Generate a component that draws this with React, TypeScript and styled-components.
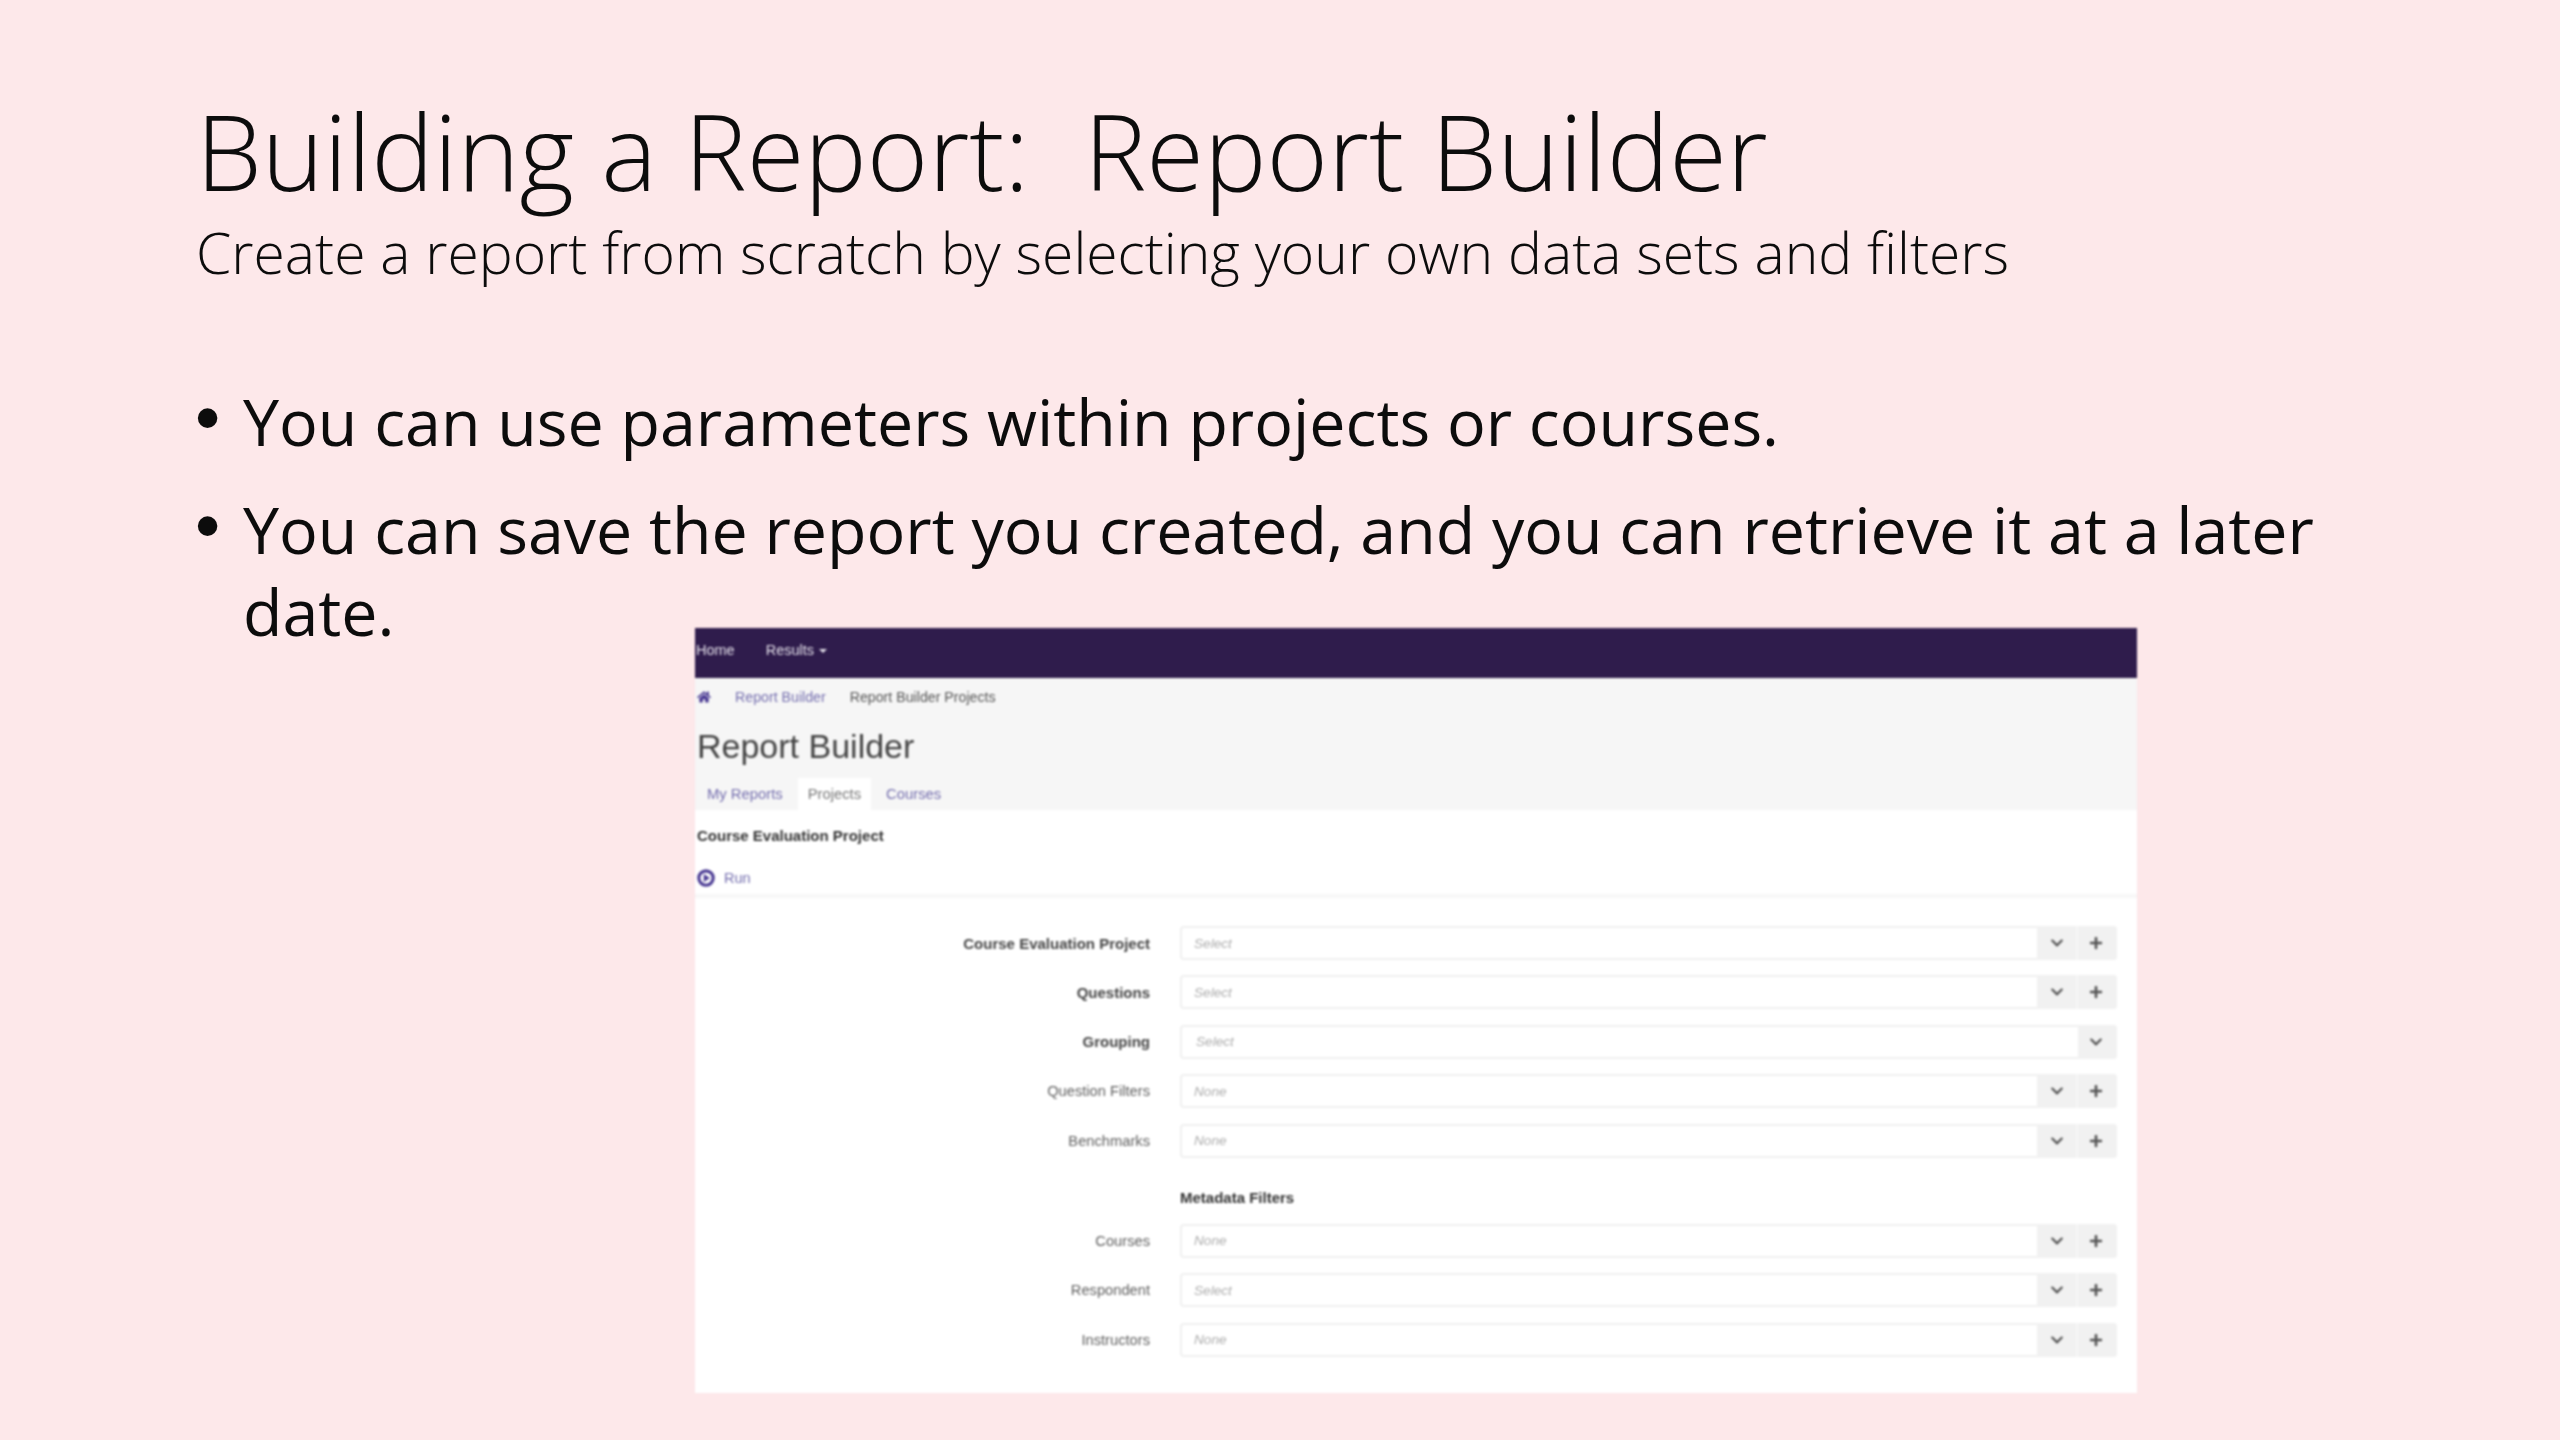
import React from "react";
import styled, { createGlobalStyle } from "styled-components";
import { FaChevronDown, FaHome, FaPlus } from "react-icons/fa";

const GlobalStyle = createGlobalStyle`
  html, body {
    margin: 0;
    padding: 0;
    background: #fde8ea;
  }
`;

const Slide = styled.div`
  width: 2560px;
  height: 1440px;
  box-sizing: border-box;
  overflow: hidden;
  padding: 86px 0 0 196px;
  display: flex;
  flex-direction: column;
  background: #fde8ea;
  color: #0c0c0c;
  font-family: "Open Sans", Lato, sans-serif;
`;

const Title = styled.h1`
  margin: 0;
  font-size: 105px;
  line-height: 130px;
  font-weight: 300;
  white-space: pre;
`;

const Subtitle = styled.p`
  margin: 0;
  font-size: 57px;
  line-height: 72px;
  font-weight: 300;
`;

const Bullets = styled.ul`
  list-style: none;
  margin: 92px 0 0;
  padding: 0;
  display: flex;
  flex-direction: column;
  gap: 26px;
`;

const Bullet = styled.li`
  position: relative;
  width: 2200px;
  padding-left: 47px;
  font-size: 64.5px;
  line-height: 82px;

  &::before {
    content: "•";
    position: absolute;
    left: -1px;
    top: -4px;
    font-family: "Liberation Sans", Arial, sans-serif;
    font-size: 72px;
  }
`;

const Panel = styled.div`
  width: 1442px;
  height: 765px;
  margin: -24px 0 0 499px;
  flex: none;
  background: #fff;
  color: #333;
  font-family: "Liberation Sans", Arial, sans-serif;
  font-size: 14.5px;
  filter: blur(0.8px);
`;

const NavBar = styled.div`
  height: 50px;
  display: flex;
  align-items: center;
  gap: 31px;
  padding: 0 0 6px 1px;
  box-sizing: border-box;
  background: #2f1c4c;
  color: #e4e0ea;
`;

const NavItem = styled.span`
  display: inline-flex;
  align-items: center;
  gap: 5px;
`;

const Caret = styled.span`
  width: 0;
  height: 0;
  margin-top: 2px;
  border-left: 4px solid transparent;
  border-right: 4px solid transparent;
  border-top: 4px solid #e4e0ea;
`;

const Header = styled.div`
  height: 132px;
  box-sizing: border-box;
  padding: 9px 0 0 2px;
  display: flex;
  flex-direction: column;
  background: #f6f6f6;
`;

const Crumbs = styled.div`
  height: 20px;
  display: flex;
  align-items: center;
  gap: 24px;
  color: #555;
  font-size: 14.2px;
  svg {
    color: #4b3b94;
    width: 14px;
    height: 14px;
  }
`;

const CrumbLink = styled.span`
  color: #746eae;
`;

const PageTitle = styled.h2`
  margin: 0;
  height: 71px;
  line-height: 79px;
  font-size: 34px;
  font-weight: 400;
  color: #444;
`;

const Tabs = styled.div`
  display: flex;
  height: 32px;
  font-size: 14.8px;
`;

const Tab = styled.span<{ $active?: boolean }>`
  display: flex;
  align-items: center;
  padding: 0 10px;
  margin: 0 ${(p) => (p.$active ? "5px" : "0")};
  background: ${(p) => (p.$active ? "#fff" : "transparent")};
  color: ${(p) => (p.$active ? "#777" : "#746eae")};
`;

const ProjectName = styled.div`
  height: 52px;
  line-height: 52px;
  padding-left: 2px;
  font-size: 15px;
  font-weight: 700;
`;

const RunBar = styled.div`
  height: 32px;
  padding: 0 0 0 2px;
  display: flex;
  align-items: center;
  gap: 9px;
  border-bottom: 4px solid #f7f7f7;
  color: #746eae;
`;

const Form = styled.div`
  padding-top: 28px;
  display: flex;
  flex-direction: column;
`;

const Row = styled.div`
  display: grid;
  grid-template-columns: 455px 937px;
  column-gap: 30px;
  height: 34px;
  margin-bottom: 15.4px;
  align-items: center;
`;

const Label = styled.label<{ $bold?: boolean }>`
  text-align: right;
  font-weight: ${(p) => (p.$bold ? 700 : 400)};
  font-size: ${(p) => (p.$bold ? "15px" : "14.7px")};
  color: ${(p) => (p.$bold ? "#444" : "#5f5f5f")};
`;

const Control = styled.div`
  display: flex;
  height: 34px;
  box-sizing: border-box;
  border: 2px solid #f0f0f0;
  border-radius: 4px;
`;

const Value = styled.span<{ $grouped?: boolean }>`
  flex: 1;
  display: flex;
  align-items: center;
  padding-left: ${(p) => (p.$grouped ? "14px" : "12px")};
  font-style: italic;
  font-size: 13.6px;
  color: #adadad;
`;

const Addon = styled.span`
  width: 39px;
  margin: -2px 0;
  display: flex;
  align-items: center;
  justify-content: center;
  background: #f1f1f1;
  color: #555;
  svg {
    width: 14px;
    height: 14px;
  }
  & + & {
    border-left: 2px solid #f7f7f7;
  }
  &:last-child {
    width: 36px;
    margin-right: -2px;
    padding-right: 3px;
    border-radius: 0 4px 4px 0;
  }
`;

const SectionTitle = styled.div`
  margin: 13px 0 14px 485px;
  height: 24px;
  line-height: 24px;
  font-size: 15px;
  font-weight: 700;
`;

type Field = { label: string; value: string; bold?: boolean; noPlus?: boolean };

const mainFields: Field[] = [
  { label: "Course Evaluation Project", value: "Select", bold: true },
  { label: "Questions", value: "Select", bold: true },
  { label: "Grouping", value: "Select", bold: true, noPlus: true },
  { label: "Question Filters", value: "None" },
  { label: "Benchmarks", value: "None" },
];

const metaFields: Field[] = [
  { label: "Courses", value: "None" },
  { label: "Respondent", value: "Select" },
  { label: "Instructors", value: "None" },
];

const RunIcon = () => (
  <svg width="18" height="18" viewBox="0 0 16 16">
    <circle cx="8" cy="8" r="6.4" fill="none" stroke="#4b3b94" strokeWidth="2.8" />
    <path d="M6 4.4 11.4 8 6 11.6Z" fill="#4b3b94" />
  </svg>
);

const FieldRow = ({ label, value, bold, noPlus }: Field) => (
  <Row>
    <Label $bold={bold}>{label}</Label>
    <Control>
      <Value $grouped={noPlus}>{value}</Value>
      <Addon>
        <FaChevronDown />
      </Addon>
      {!noPlus && (
        <Addon>
          <FaPlus />
        </Addon>
      )}
    </Control>
  </Row>
);

export default function App() {
  return (
    <>
      <GlobalStyle />
      <Slide>
        <Title>Building a Report:  Report Builder</Title>
        <Subtitle>Create a report from scratch by selecting your own data sets and filters</Subtitle>
        <Bullets>
          <Bullet>You can use parameters within projects or courses.</Bullet>
          <Bullet>You can save the report you created, and you can retrieve it at a later date.</Bullet>
        </Bullets>
        <Panel>
          <NavBar>
            <NavItem>Home</NavItem>
            <NavItem>
              Results <Caret />
            </NavItem>
          </NavBar>
          <Header>
            <Crumbs>
              <FaHome />
              <CrumbLink>Report Builder</CrumbLink>
              <span>Report Builder Projects</span>
            </Crumbs>
            <PageTitle>Report Builder</PageTitle>
            <Tabs>
              <Tab>My Reports</Tab>
              <Tab $active>Projects</Tab>
              <Tab>Courses</Tab>
            </Tabs>
          </Header>
          <ProjectName>Course Evaluation Project</ProjectName>
          <RunBar>
            <RunIcon />
            Run
          </RunBar>
          <Form>
            {mainFields.map((f) => (
              <FieldRow key={f.label} {...f} />
            ))}
            <SectionTitle>Metadata Filters</SectionTitle>
            {metaFields.map((f) => (
              <FieldRow key={f.label} {...f} />
            ))}
          </Form>
        </Panel>
      </Slide>
    </>
  );
}
